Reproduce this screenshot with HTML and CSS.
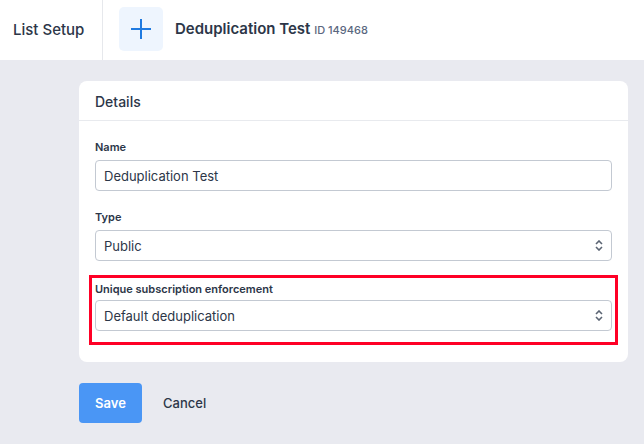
FILE: index.html
```html
<!DOCTYPE html>
<html>
<head>
<meta charset="utf-8">
<link rel="stylesheet" href="styles.css">
</head>
<body>
<header class="topbar">
  <div class="crumb">List Setup</div>
  <div class="title-area">
    <div class="icon-box">
      <svg width="20" height="20" viewBox="0 0 20 20"><path d="M10 0V20M0 10H20" stroke="#1f7ae0" stroke-width="2" fill="none"/></svg>
    </div>
    <div class="title">Deduplication Test <span class="list-id">ID 149468</span></div>
  </div>
</header>
<main class="content">
  <section class="card">
    <div class="card-head">Details</div>
    <div class="card-body">
      <div class="field">
        <label class="label">Name</label>
        <div class="control">Deduplication Test</div>
      </div>
      <div class="field">
        <label class="label">Type</label>
        <div class="control select">Public<svg class="caret" width="8" height="11" viewBox="0 0 8 11"><path d="M1 4L4 1L7 4M1 7L4 10L7 7" stroke="#5b6473" stroke-width="1.6" fill="none"/></svg></div>
      </div>
      <div class="field highlight">
        <label class="label">Unique subscription enforcement</label>
        <div class="control select">Default deduplication<svg class="caret" width="8" height="11" viewBox="0 0 8 11"><path d="M1 4L4 1L7 4M1 7L4 10L7 7" stroke="#5b6473" stroke-width="1.6" fill="none"/></svg></div>
      </div>
    </div>
  </section>
  <div class="actions">
    <button class="btn-save">Save</button>
    <button class="btn-cancel">Cancel</button>
  </div>
</main>
</body>
</html>
```
FILE: styles.css
```css
* { box-sizing: border-box; }
html, body { margin: 0; padding: 0; }
body {
  font-family: Inter, "Noto Sans", sans-serif;
  background: #e9eaf0;
  color: #2c3648;
  width: 644px;
  height: 444px;
  overflow: hidden;
}
.topbar {
  height: 60px;
  background: #fff;
  display: flex;
  align-items: stretch;
}
.crumb {
  width: 103px;
  border-right: 1px solid #e6e8ec;
  display: flex;
  align-items: center;
  padding-left: 13px;
  font-size: 15px;
  font-weight: 500;
  color: #2c3648;
  padding-bottom: 2px;
}
.title-area {
  display: flex;
  align-items: center;
  padding-left: 16px;
}
.icon-box {
  width: 44px;
  height: 44px;
  background: #eef5fe;
  border-radius: 5px;
  display: flex;
  align-items: center;
  justify-content: center;
  margin-bottom: 2px;
}
.title {
  margin-left: 12px;
  font-size: 15px;
  font-weight: 600;
  color: #2c3648;
  padding-bottom: 3px;
}
.list-id {
  font-size: 11px;
  font-weight: 500;
  color: #5a6780;
}
.content {
  padding: 21px 16px 0 79px;
}
.card {
  background: #fff;
  border-radius: 8px;
  width: 549px;
}
.card-head {
  height: 40px;
  border-bottom: 1px solid #e8eaee;
  padding: 12px 16px 0;
  font-size: 14px;
  font-weight: 500;
  color: #2c3648;
}
.card-body {
  padding: 20px 16px 17px;
}
.field { margin-bottom: 20px; }
.field:last-child { margin-bottom: 0; }
.label {
  display: block;
  font-size: 11px;
  font-weight: 600;
  color: #2c3648;
  margin-bottom: 6px;
  line-height: 13px;
}
.control {
  height: 31px;
  border: 1px solid #c3c9d2;
  border-radius: 4px;
  padding: 0 8px;
  display: flex;
  align-items: center;
  justify-content: space-between;
  font-size: 13px;
  color: #2c3648;
}
.highlight {
  border: 3px solid #ff0026;
  margin: -6px -6px 0 -6px;
  padding: 5px 3px 11px 3px;
}
.highlight .label { margin-bottom: 4px; }
.actions {
  display: flex;
  align-items: center;
  margin-top: 21px;
}
.btn-save {
  width: 63px;
  height: 40px;
  background: #4a96f5;
  color: #fff;
  border: none;
  border-radius: 4px;
  font-family: inherit;
  font-size: 13px;
  font-weight: 600;
}
.btn-cancel {
  background: none;
  border: none;
  margin-left: 13px;
  padding: 0 8px;
  font-family: inherit;
  font-size: 13px;
  font-weight: 500;
  color: #2c3648;
}
```
